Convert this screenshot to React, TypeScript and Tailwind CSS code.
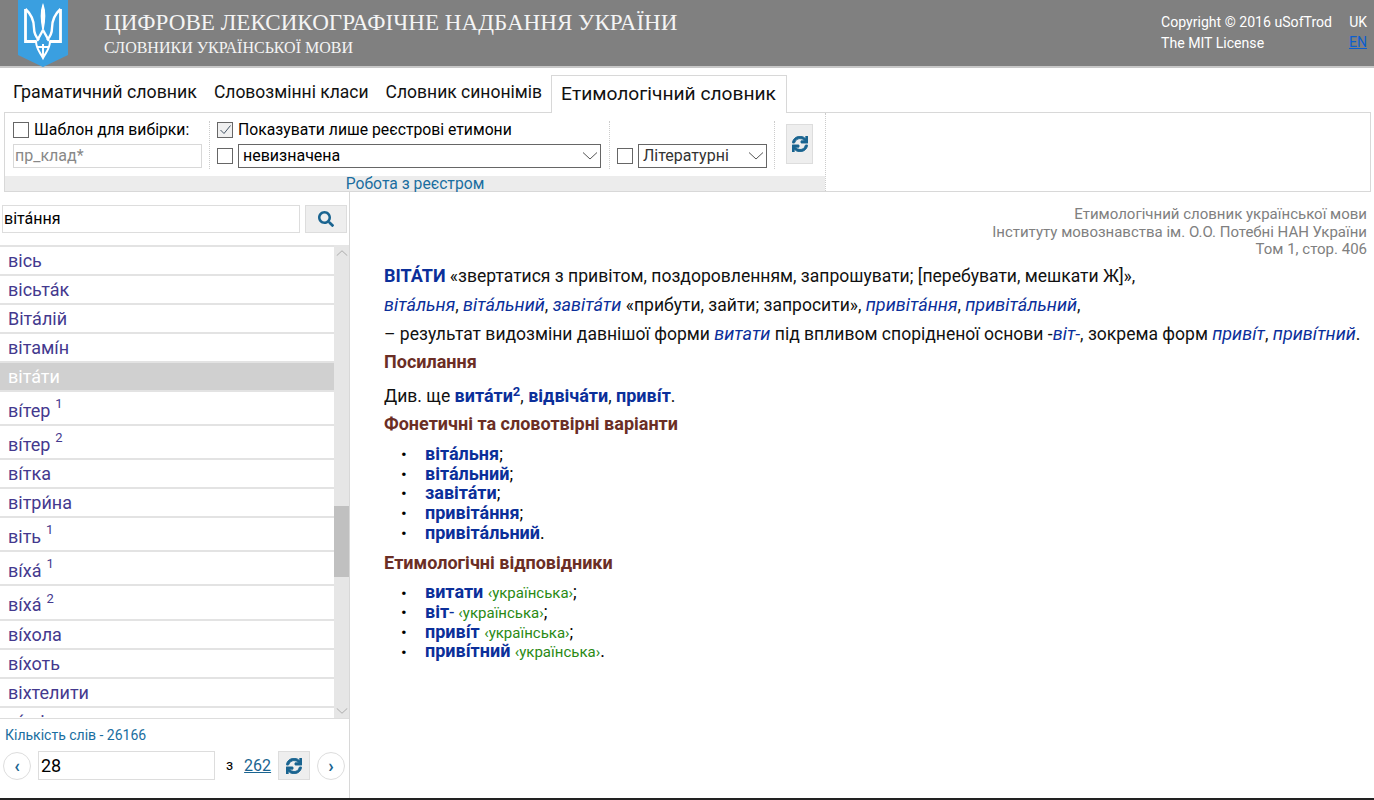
import React from "react";
import { FaSearch, FaSync } from "react-icons/fa";

const A = "\u0301";

function Box({ checked }: { checked?: boolean }) {
  return (
    <span className={`flex h-[16px] w-[16px] shrink-0 items-center justify-center border border-[#666] ${checked ? "bg-[#f0f0f0]" : "bg-white"}`}>
      {checked && (
        <svg width="13" height="13" viewBox="0 0 13 13" fill="none" stroke="#456" strokeWidth="1">
          <path d="M1.5 7 L5 10.5 L11.5 2.5" />
        </svg>
      )}
    </span>
  );
}

function Chevron({ up, color = "#555" }: { up?: boolean; color?: string }) {
  return (
    <svg width="16" height="8" viewBox="0 0 16 8" fill="none" stroke={color} strokeWidth="1">
      <path d={up ? "M1 7.5 L8 1 L15 7.5" : "M1 .5 L8 7 L15 .5"} />
    </svg>
  );
}

function Sync() {
  return <FaSync className="text-[16px] text-[#1a6490]" stroke="currentColor" strokeWidth={30} />;
}

function Trident() {
  return (
    <svg width="50" height="68" viewBox="0 0 50 68" className="shrink-0">
      <path d="M0 0 H50 V55 L25 67 L0 55 Z" fill="#3a9fe0" />
      <g fill="none" stroke="#fff" strokeWidth="2.4" strokeLinejoin="miter">
        <path d="M7.5 9 V41.5 H18 M42.5 9 V41.5 H32" strokeWidth="2.8" />
        <path d="M7.5 9 C13 14 16 20 16 28 C16 33 18 37 21 40 M42.5 9 C37 14 34 20 34 28 C34 33 32 37 29 40" />
        <path d="M25 5 C22.5 12 23 20 25 30 C27 20 27.5 12 25 5 Z" fill="#fff" strokeWidth="1.4" />
        <path d="M25 30 L19 41 M25 30 L31 41" />
        <path d="M18 41 C18 49 22 52 25 58 C28 52 32 49 32 41 M25 44 V58 M19 47 H31" strokeWidth="2" />
      </g>
    </svg>
  );
}

type Row = { w: string; sup?: string };
const rows: Row[] = [
  { w: "вісь" },
  { w: `вісьта${A}к` },
  { w: `Віта${A}лій` },
  { w: `вітамі${A}н` },
  { w: `віта${A}ти` },
  { w: `ві${A}тер`, sup: "1" },
  { w: `ві${A}тер`, sup: "2" },
  { w: `ві${A}тка` },
  { w: `вітри${A}на` },
  { w: "віть", sup: "1" },
  { w: `ві${A}ха${A}`, sup: "1" },
  { w: `ві${A}ха${A}`, sup: "2" },
  { w: `ві${A}хола` },
  { w: `ві${A}хоть` },
  { w: "віхтелити" },
  { w: `ві${A}хті` },
];

const H = ({ children }: { children: React.ReactNode }) => (
  <h3 className="text-[18px] font-bold leading-[20px] text-[#6b2e25]">{children}</h3>
);
const B = ({ children }: { children: React.ReactNode }) => (
  <b className="text-[18px] font-bold text-[#0b2f9a]">{children}</b>
);
const I = ({ children }: { children: React.ReactNode }) => (
  <i className="text-[18px] text-[#0b2f9a]">{children}</i>
);
const G = () => <span className="text-[15px] text-[#2a8a14]">‹українська›</span>;

function Li({ children }: { children: React.ReactNode }) {
  return (
    <li className="flex h-[19.75px] items-center whitespace-pre pl-[17px] leading-[20px]">
      <span className="w-[24px] text-[17px] text-black">•</span>
      <span>{children}</span>
    </li>
  );
}

export default function App() {
  return (
    <div className="flex h-[800px] w-[1374px] flex-col overflow-hidden bg-white font-['Roboto',sans-serif] text-black">
      <header className="flex h-[68px] shrink-0 items-start border-b-2 border-[#c8c8c8] bg-[#808080] text-white">
        <div className="ml-[18px]"><Trident /></div>
        <div className="ml-[36px] flex flex-col font-['Liberation_Serif',serif]">
          <span className="mt-[8px] text-[23.1px] leading-[28px] text-[#f4f4f4]">ЦИФРОВЕ ЛЕКСИКОГРАФІЧНЕ НАДБАННЯ УКРАЇНИ</span>
          <span className="mt-[2px] text-[16px] leading-[20px] text-[#f4f4f4]">СЛОВНИКИ УКРАЇНСЬКОЇ МОВИ</span>
        </div>
        <div className="ml-auto mt-[12px] flex flex-col text-[14.1px] leading-[21px]">
          <span>Copyright © 2016 uSofTrod</span>
          <span>The MIT License</span>
        </div>
        <div className="ml-[17px] mr-[7px] mt-[12px] flex flex-col items-end text-[14px] leading-[20px]">
          <span>UK</span>
          <a className="text-[#0b5fd0] underline">EN</a>
        </div>
      </header>

      <nav className="flex h-[44px] shrink-0 items-end pl-[4px] text-[17.5px]">
        <span className="flex h-[38px] items-center pb-[2px] pl-[9px] pr-[8px] text-[17.75px] text-[#111]">Граматичний словник</span>
        <span className="flex h-[38px] items-center pb-[2px] pl-[9px] pr-[8px] text-[#111]">Словозмінні класи</span>
        <span className="flex h-[38px] items-center pb-[2px] pl-[9px] pr-[9px] text-[#111]">Словник синонімів</span>
        <span className="z-10 -mb-px flex h-[38px] items-center border border-b-0 border-[#d8d8d8] bg-white pl-[9px] pr-[10px] text-[19.2px] text-[#111]">Етимологічний словник</span>
      </nav>

      <section className="ml-[4px] mr-[3px] flex h-[80px] shrink-0 border border-[#d8d8d8]">
        <div className="flex w-[820px] flex-col">
          <div className="flex h-[64px] items-start text-[15.75px]">
            <div className="flex h-[56px] w-[204px] flex-col pl-[8px] pt-[8px]">
              <label className="flex h-[17px] items-center gap-[5px]"><Box /><span>Шаблон для вибірки:</span></label>
              <div className="mt-[6px] flex h-[24px] w-[189px] items-center border border-[#d8d8d8] pl-[1px] text-[16px] text-[#888]">пр_клад*</div>
            </div>
            <div className="mt-[8px] flex h-[48px] w-[400px] flex-col border-l border-dotted border-[#ccc] pl-[7px]">
              <label className="flex h-[17px] items-center gap-[5px]"><Box checked /><span>Показувати лише реєстрові етимони</span></label>
              <div className="mt-[6px] flex items-center gap-[5px]">
                <Box />
                <div className="flex h-[24px] w-[363px] items-center justify-between border border-[#666] pl-[4px] pr-[2px] text-[16px]">
                  <span>невизначена</span><Chevron />
                </div>
              </div>
            </div>
            <div className="mt-[8px] flex h-[48px] w-[166px] items-end border-l border-r border-dotted border-[#ccc] pb-[1px] pl-[7px]">
              <div className="flex items-center gap-[5px]">
                <Box />
                <div className="flex h-[24px] w-[129px] items-center justify-between border border-[#666] pl-[4px] pr-[2px] text-[16px] text-[#333]">
                  <span>Літературні</span><Chevron />
                </div>
              </div>
            </div>
            <div className="ml-[11px] mt-[11px] flex h-[40px] w-[27px] items-center justify-center border border-[#ddd] bg-[#eee]">
              <Sync />
            </div>
          </div>
          <div className="flex h-[15px] items-center justify-center bg-[#ececec] text-[15.7px] leading-[15px] text-[#1a6ea0]">Робота з реєстром</div>
        </div>
        <div className="border-l border-dotted border-[#ccc]" />
      </section>

      <main className="flex min-h-0 flex-1 border-b-2 border-[#222]">
        <aside className="flex w-[350px] shrink-0 flex-col border-r border-[#d8d8d8]">
          <div className="flex h-[53px] shrink-0 items-start pl-[2px] pt-[13px]">
            <div className="flex h-[28px] w-[298px] items-center border border-[#ddd] px-[1px] text-[16px]">віта{A}ння</div>
            <div className="ml-[5px] flex h-[28px] w-[42px] items-center justify-center border border-[#ddd] bg-[#eee]">
              <FaSearch className="text-[16px] text-[#1a6490]" />
            </div>
          </div>
          <div className="flex h-[474px] shrink-0 border-b border-[#ddd]">
            <ul className="min-w-0 flex-1 overflow-hidden">
              {rows.map((r, i) => (
                <li
                  key={i}
                  className={`flex items-center border-t-2 border-[#e3e3e3] px-[8px] text-[18px] ${i === 11 ? "h-[35px] pt-[4px]" : r.sup ? "h-[34px] pt-[4px]" : "h-[29px]"} ${i === 4 ? "bg-[#d0d0d0] text-white" : "text-[#44398e]"}`}
                >
                  <span>{r.w}</span>
                  {r.sup && <sup className="ml-[5px] text-[13px] leading-none text-[#44398e]">{r.sup}</sup>}
                </li>
              ))}
            </ul>
            <div className="flex w-[15px] shrink-0 flex-col items-center bg-[#e6e6e6]">
              <div className="flex h-[15px] items-center"><span className="scale-75"><Chevron up color="#999" /></span></div>
              <div className="h-[246px]" />
              <div className="h-[71px] w-full bg-[#c0c0c0]" />
              <div className="flex-1" />
              <div className="flex h-[15px] items-center"><span className="scale-75"><Chevron color="#999" /></span></div>
            </div>
          </div>
          <div className="px-[5px] pt-[7px] text-[14px] leading-[18px] text-[#1a6ea0]">Кількість слів - 26166</div>
          <div className="mt-[7px] flex items-center pl-[3px] text-[16px]">
            <span className="flex h-[28px] w-[28px] items-center justify-center rounded-full border border-[#ddd] text-[18px] font-bold leading-none text-[#1a6490]">‹</span>
            <span className="ml-[7px] flex h-[29px] w-[177px] items-center border border-[#ddd] pl-[2px] text-[18px]">28</span>
            <span className="ml-[11px] text-[14px]">з</span>
            <a className="ml-[11px] text-[#1a6490] underline">262</a>
            <span className="ml-[7px] flex h-[29px] w-[32px] items-center justify-center border border-[#ddd] bg-[#eee]"><Sync /></span>
            <span className="ml-[7px] flex h-[28px] w-[28px] items-center justify-center rounded-full border border-[#ddd] text-[18px] font-bold leading-none text-[#1a6490]">›</span>
          </div>
        </aside>

        <article className="flex min-w-0 flex-1 flex-col pl-[34px] pr-[7px] pt-[14px] text-[17.55px]">
          <div className="text-right text-[15px] leading-[17.5px] text-[#808080]">
            <div>Етимологічний словник української мови</div>
            <div>Інституту мовознавства ім. О.О. Потебні НАН України</div>
            <div>Том 1, стор. 406</div>
          </div>
          <div className="mt-[2px] whitespace-nowrap leading-[29px] text-[#111]">
            <div className="h-[29px]"><B>ВІТА{A}ТИ</B> «звертатися з привітом, поздоровленням, запрошувати; [перебувати, мешкати Ж]»,</div>
            <div className="h-[29px]"><I>віта{A}льня</I>, <I>віта{A}льний</I>, <I>завіта{A}ти</I> «прибути, зайти; запросити», <I>привіта{A}ння</I>, <I>привіта{A}льний</I>,</div>
            <div className="h-[29px]">– результат видозміни давнішої форми <I>витати</I> під впливом спорідненої основи -<I>віт-</I>, зокрема форм <I>приві{A}т</I>, <I>приві{A}тний</I>.</div>
          </div>
          <div className="mt-[4.5px]"><H>Посилання</H></div>
          <div className="mt-[13px] h-[22px] leading-[22px] text-[#111]">Див. ще <B>вита{A}ти<sup className="text-[13px]">2</sup></B>, <B>відвіча{A}ти</B>, <B>приві{A}т</B>.</div>
          <div className="mt-[7px]"><H>Фонетичні та словотвірні варіанти</H></div>
          <ul className="mt-[10px]">
            <Li><B>віта{A}льня</B>;</Li>
            <Li><B>віта{A}льний</B>;</Li>
            <Li><B>завіта{A}ти</B>;</Li>
            <Li><B>привіта{A}ння</B>;</Li>
            <Li><B>привіта{A}льний</B>.</Li>
          </ul>
          <div className="mt-[10px]"><H>Етимологічні відповідники</H></div>
          <ul className="mt-[10px]">
            <Li><B>витати</B> <G />;</Li>
            <Li><B>віт</B><span className="text-[#0b2f9a]">-</span> <G />;</Li>
            <Li><B>приві{A}т</B> <G />;</Li>
            <Li><B>приві{A}тний</B> <G />.</Li>
          </ul>
        </article>
      </main>
    </div>
  );
}
